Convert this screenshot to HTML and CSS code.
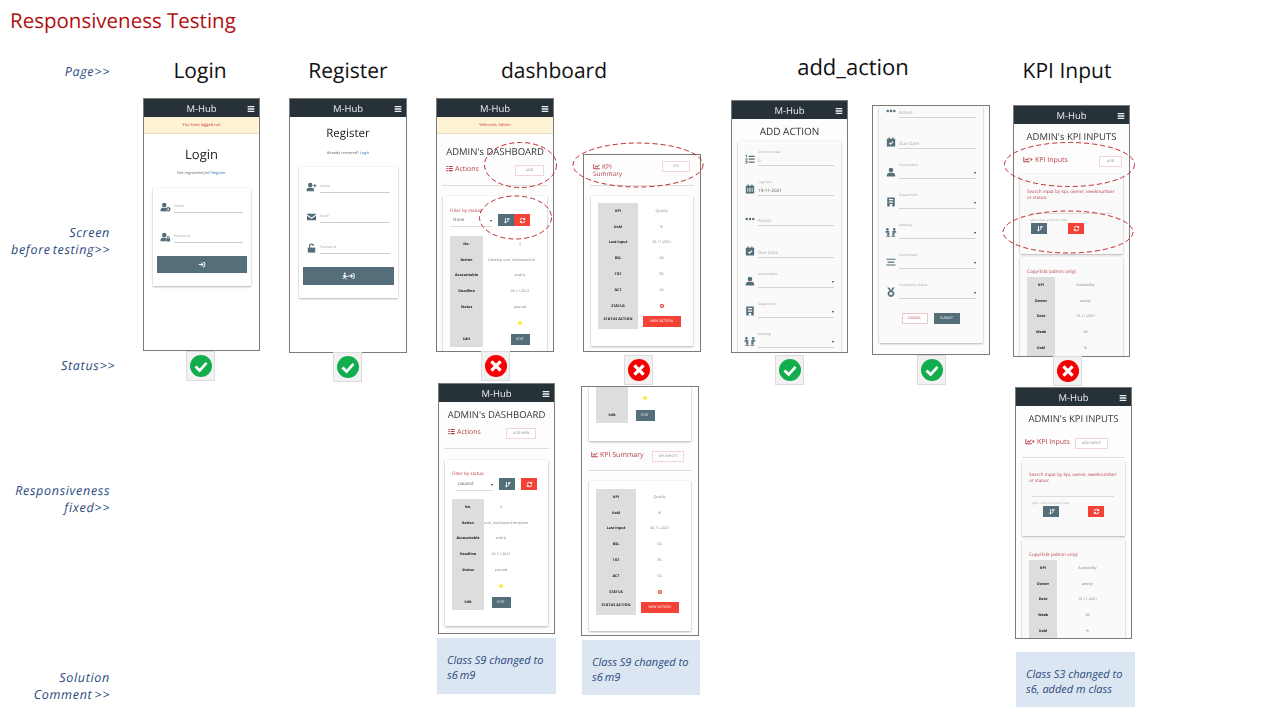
FILE: index.html
```html
<!DOCTYPE html>
<html lang="en">
<head>
<meta charset="utf-8">
<title>Responsiveness Testing</title>
<link rel="stylesheet" href="styles.css">
</head>
<body>
<svg class="defs" width="0" height="0" aria-hidden="true">
  <symbol id="i-menu" viewBox="0 0 24 24"><path d="M2 3h20v4H2zM2 10h20v4H2zM2 17h20v4H2z"/></symbol>
  <symbol id="i-user" viewBox="0 0 24 24"><circle cx="12" cy="7" r="5.5"/><path d="M2 23v-3c0-4 3-6.5 6-6.5h8c3 0 6 2.500 6 6.500v3z"/></symbol>
  <symbol id="i-usercog" viewBox="0 0 24 24"><circle cx="9" cy="7" r="5.500"/><path d="M0 22v-3c0-3 2.500-5.500 5-5.500h8l1 1.500-1 8z"/><path fill-rule="evenodd" d="M18.500 12a5.500 5.500 0 1 0 .01 0zM18.500 15.500a2 2 0 1 1-.01 0z"/></symbol>
  <symbol id="i-userlock" viewBox="0 0 24 24"><circle cx="9" cy="7" r="5.500"/><path d="M0 22v-3c0-3 2.500-5.500 5-5.500h8v8.500z"/><path fill-rule="evenodd" d="M14 15h1v-2a3.500 3.500 0 0 1 7 0v2h1v8h-9zM17 15h3v-2a1.500 1.500 0 0 0-3 0z"/></symbol>
  <symbol id="i-userplus" viewBox="0 0 24 24"><circle cx="9" cy="7" r="5.500"/><path d="M0 22v-3c0-3 2.500-5.500 5-5.500h8c3 0 5 2.500 5 5.500v3z"/><path d="M19 5h2v3h3v2h-3v3h-2v-3h-3V8h3z"/></symbol>
  <symbol id="i-mail" viewBox="0 0 24 24"><path d="M1 4h22v2L12 13 1 6z"/><path d="M1 9l11 7 11-7v11H1z"/></symbol>
  <symbol id="i-unlock" viewBox="0 0 24 24"><path d="M3 11h18v12H3z"/><path d="M6 11V7a6 6 0 0 1 12 0h-3a3 3 0 0 0-6 0v4z"/></symbol>
  <symbol id="i-signin" viewBox="0 0 24 24"><path d="M1 10h9V5l8 7-8 7v-5H1z"/><path d="M15 3h3a5 5 0 0 1 5 5v8a5 5 0 0 1-5 5h-3v-3h3a2 2 0 0 0 2-2V8a2 2 0 0 0-2-2h-3z"/></symbol>
  <symbol id="i-run" viewBox="0 0 42 24"><circle cx="9" cy="4" r="3"/><path d="M5 8h6l4 5h4v2h-5l-2-2-1 4 3 3v4h-2v-3l-4-3-2 3H1v-2h4l2-7-2 1-1 3H2z"/><path d="M20 10h9V5l7 7-7 7v-5h-9z"/><path d="M34 3h2a5 5 0 0 1 5 5v8a5 5 0 0 1-5 5h-2v-3h2a2 2 0 0 0 2-2V8a2 2 0 0 0-2-2h-2z"/></symbol>
  <symbol id="i-list" viewBox="0 0 24 24"><path d="M1 3h5v4H1zM9 3h14v4H9zM1 10h5v4H1zM9 10h14v4H9zM1 17h5v4H1zM9 17h14v4H9z"/></symbol>
  <symbol id="i-chart" viewBox="0 0 24 24"><path d="M1 3h3v15h19v3H1z"/><path d="M6 14l5-6 4 4 6-7 2 2-8 9-4-4-3 4z"/></symbol>
  <symbol id="i-chartplay" viewBox="0 0 34 24"><path d="M1 3h3v15h19v3H1z"/><path d="M6 14l5-6 4 4 6-7 2 2-8 9-4-4-3 4z"/><path d="M26 6l7 6-7 6z"/></symbol>
  <symbol id="i-sort" viewBox="0 0 24 24"><path d="M7 3h3v13h4l-5.500 6L3 16h4z"/><path d="M14 3h9v3h-9zM14 8h7v3h-7zM14 13h4v3h-4z"/></symbol>
  <symbol id="i-sync" viewBox="0 0 24 24"><path d="M3 11a9 9 0 0 1 15-6l3-3v8h-8l3-3a6 6 0 0 0-10 4z"/><path d="M21 13a9 9 0 0 1-15 6l-3 3v-8h8l-3 3a6 6 0 0 0 10-4z"/></symbol>
  <symbol id="i-listol" viewBox="0 0 24 24"><path d="M9 4h14v3H9zM9 11h14v3H9zM9 18h14v3H9z"/><path d="M2 2h3v6H3V4H2zM1 10h5v2l-3 2h3v1.500H1v-2l3-2H1zM1 17h5v6H1v-1.500h3V20.500H2v-1.500h2v-.5H1z"/></symbol>
  <symbol id="i-cal" viewBox="0 0 24 24"><path fill-rule="evenodd" d="M2 4h4V1h3v3h6V1h3v3h4v19H2zM5 10v3h3v-3zM10 10v3h4v-3zM16 10v3h3v-3zM5 15v3h3v-3zM10 15v3h4v-3zM16 15v3h3v-3z"/></symbol>
  <symbol id="i-calcheck" viewBox="0 0 24 24"><path fill-rule="evenodd" d="M2 4h4V1h3v3h6V1h3v3h4v19H2zM7 15l4 4 7-7-2-2-5 5-2-2z"/></symbol>
  <symbol id="i-dots" viewBox="0 0 24 24"><circle cx="4" cy="12" r="3"/><circle cx="12" cy="12" r="3"/><circle cx="20" cy="12" r="3"/></symbol>
  <symbol id="i-bldg" viewBox="0 0 24 24"><path fill-rule="evenodd" d="M3 1h18v22h-6v-6H9v6H3zM7 5v3h10V5zM7 11v3h10v-3z"/></symbol>
  <symbol id="i-people" viewBox="0 0 30 24"><circle cx="6" cy="5" r="3"/><path d="M1 14v-2c0-2 2-3 5-3s5 1 5 3v2z"/><circle cx="23" cy="5" r="3"/><path d="M18 12c0-2 2-3 5-3s5 1 5 3v2H18z"/><circle cx="8" cy="17" r="3"/><path d="M3 24v-1c0-1 2-2 5-2s5 1 5 2v1z"/><circle cx="21" cy="17" r="3"/><path d="M16 24v-1c0-1 2-2 5-2s5 1 5 2v1z"/></symbol>
  <symbol id="i-lines" viewBox="0 0 24 24"><path d="M1 4h22v2.500H1zM4 11h16v2.500H4zM1 18h22v2.500H1z"/></symbol>
  <symbol id="i-medal" viewBox="0 0 24 24"><path d="M3 1h5l4 6 4-6h5l-6 8H9z"/><path fill-rule="evenodd" d="M12 8a8 8 0 1 0 .01 0zM12 12a4 4 0 1 1-.01 0z"/></symbol>
  <symbol id="i-ok" viewBox="0 0 24 24"><circle cx="12" cy="12" r="12" fill="#12ad4d"/><path d="M6 12.500l4.500 4.500L18 8.500" fill="none" stroke="#fff" stroke-width="3"/></symbol>
  <symbol id="i-no" viewBox="0 0 24 24"><circle cx="12" cy="12" r="12" fill="#f40000"/><path d="M7 7l10 10M17 7L7 17" fill="none" stroke="#fff" stroke-width="3.600"/></symbol>
  <symbol id="i-xdot" viewBox="0 0 24 24"><circle cx="12" cy="12" r="12" fill="#e53935"/><path d="M7 7l10 10M17 7L7 17" fill="none" stroke="#fff" stroke-width="4"/></symbol>
</svg>

<main class="slide">
  <h1 class="title">Responsiveness Testing</h1>

  <p class="lbl lbl-page">Page&gt;&gt;</p>
  <p class="lbl lbl-screen">Screen<br>before testing&gt;&gt;</p>
  <p class="lbl lbl-status">Status&gt;&gt;</p>
  <p class="lbl lbl-fixed">Responsiveness<br>fixed&gt;&gt;</p>
  <p class="lbl lbl-comment">Solution<br>Comment &gt;&gt;</p>

  <h2 class="col col-login">Login</h2>
  <h2 class="col col-register">Register</h2>
  <h2 class="col col-dash">dashboard</h2>
  <h2 class="col col-add">add_action</h2>
  <h2 class="col col-kpi">KPI Input</h2>

  <!-- Login -->
  <section class="phone ph-login">
    <div class="nav"><span></span><span>M-Hub</span><svg class="burger"><use href="#i-menu"/></svg></div>
    <div class="flash">You have logged out</div>
    <h3 class="auth-h auth-h-login">Login</h3>
    <p class="auth-sub">Not registered yet? <a class="link">Register</a></p>
    <div class="card auth-card auth-card-login">
      <div class="af"><svg class="ai"><use href="#i-usercog"/></svg><div class="ab">Name</div></div>
      <div class="af af-next"><svg class="ai"><use href="#i-userlock"/></svg><div class="ab">Password</div></div>
      <div class="auth-btn"><svg class="bi"><use href="#i-signin"/></svg></div>
    </div>
  </section>

  <!-- Register -->
  <section class="phone ph-register">
    <div class="nav"><span></span><span>M-Hub</span><svg class="burger"><use href="#i-menu"/></svg></div>
    <h3 class="auth-h auth-h-reg">Register</h3>
    <p class="auth-sub">Already reistered? <a class="link">Login</a></p>
    <div class="card auth-card auth-card-reg">
      <div class="af"><svg class="ai"><use href="#i-userplus"/></svg><div class="ab">Name</div></div>
      <div class="af af-next"><svg class="ai"><use href="#i-mail"/></svg><div class="ab">Email</div></div>
      <div class="af af-wide"><svg class="ai"><use href="#i-unlock"/></svg><div class="ab">Password</div></div>
      <div class="auth-btn auth-btn-reg"><svg class="bi bi-run"><use href="#i-run"/></svg></div>
    </div>
  </section>

  <!-- Dashboard before -->
  <section class="phone ph-dash">
    <div class="nav"><span></span><span>M-Hub</span><svg class="burger"><use href="#i-menu"/></svg></div>
    <div class="flash">Welcome, Admin</div>
    <h3 class="page-h">ADMIN's DASHBOARD</h3>
    <div class="head"><span class="head-t"><svg class="hi"><use href="#i-list"/></svg>Actions</span><span class="btn-o btn-o-add">ADD</span></div>
    <hr class="rule">
    <div class="card dash-card">
      <p class="red-t">Filter by status:</p>
      <div class="ctl">
        <div class="sel sel-none">None<i class="caret"></i></div>
        <span class="ib ib-sort"><svg><use href="#i-sort"/></svg></span><span class="ib ib-sync"><svg><use href="#i-sync"/></svg></span>
      </div>
      <table class="kv kv-dash">
        <tr><th>No.</th><td>2</td></tr>
        <tr><th>Action</th><td><div class="clip">Develop user_dashboard te</div></td></tr>
        <tr><th>Accountable</th><td>andriy</td></tr>
        <tr><th>Deadline</th><td>26-11-2021</td></tr>
        <tr><th>Status</th><td>paused</td></tr>
        <tr><th></th><td><i class="dot"></i></td></tr>
        <tr><th>Edit</th><td><span class="b-edit">EDIT</span></td></tr>
      </table>
    </div>
  </section>

  <!-- KPI summary before -->
  <section class="phone ph-sum">
    <div class="head head-sum"><span class="head-t head-wrap"><svg class="hi"><use href="#i-chart"/></svg>KPI<br>Summary</span><span class="btn-o btn-o-kpi">KPI</span></div>
    <hr class="rule rule-sum">
    <div class="card sum-card">
      <table class="kv kv-sum">
        <tr><th>KPI</th><td>Quality</td></tr>
        <tr><th>UoM</th><td>%</td></tr>
        <tr><th>Last Input</th><td>30-11-2021</td></tr>
        <tr><th>BSL</th><td>60</td></tr>
        <tr><th>TGT</th><td>85</td></tr>
        <tr><th>ACT</th><td>63</td></tr>
        <tr><th>STATUS</th><td><svg class="xd"><use href="#i-xdot"/></svg></td></tr>
        <tr><th class="th-top">STATUS ACTION</th><td><span class="b-new">NEW ACTION</span></td></tr>
      </table>
    </div>
  </section>

  <!-- Add action 1 -->
  <section class="phone ph-add">
    <div class="nav"><span></span><span>M-Hub</span><svg class="burger"><use href="#i-menu"/></svg></div>
    <h3 class="page-h page-h-add">ADD ACTION</h3>
    <div class="card form-card">
      <div class="f f-first"><svg class="fi"><use href="#i-listol"/></svg><div class="fb"><label>Action number</label><div class="v">0</div></div></div>
      <div class="f"><svg class="fi"><use href="#i-cal"/></svg><div class="fb"><label>Log Date</label><div class="v v-dark">19-11-2021</div></div></div>
      <div class="f"><svg class="fi"><use href="#i-dots"/></svg><div class="fb"><div class="v">Action</div></div></div>
      <div class="f f-tall"><svg class="fi"><use href="#i-calcheck"/></svg><div class="fb"><div class="v">Due Date</div></div></div>
      <div class="f"><svg class="fi"><use href="#i-user"/></svg><div class="fb"><label>Accountable</label><div class="v"><i class="caret"></i></div></div></div>
      <div class="f"><svg class="fi"><use href="#i-bldg"/></svg><div class="fb"><label>Department</label><div class="v"><i class="caret"></i></div></div></div>
      <div class="f"><svg class="fi fi-wide"><use href="#i-people"/></svg><div class="fb"><label>Meeting</label><div class="v"><i class="caret"></i></div></div></div>
    </div>
  </section>

  <!-- Add action 2 -->
  <section class="phone ph-add2">
    <div class="card form-card form-card-2">
      <div class="f f-cut"><svg class="fi"><use href="#i-dots"/></svg><div class="fb"><div class="v">Action</div></div></div>
      <div class="f f-tall"><svg class="fi"><use href="#i-calcheck"/></svg><div class="fb"><div class="v">Due Date</div></div></div>
      <div class="f"><svg class="fi"><use href="#i-user"/></svg><div class="fb"><label>Accountable</label><div class="v"><i class="caret"></i></div></div></div>
      <div class="f"><svg class="fi"><use href="#i-bldg"/></svg><div class="fb"><label>Department</label><div class="v"><i class="caret"></i></div></div></div>
      <div class="f"><svg class="fi fi-wide"><use href="#i-people"/></svg><div class="fb"><label>Meeting</label><div class="v"><i class="caret"></i></div></div></div>
      <div class="f"><svg class="fi"><use href="#i-lines"/></svg><div class="fb"><label>Workstream</label><div class="v"><i class="caret"></i></div></div></div>
      <div class="f"><svg class="fi"><use href="#i-medal"/></svg><div class="fb"><label>Completion Status</label><div class="v"><i class="caret"></i></div></div></div>
      <div class="form-act"><span class="btn-o btn-o-cancel">CANCEL</span><span class="b-submit">SUBMIT</span></div>
    </div>
  </section>

  <!-- KPI input before -->
  <section class="phone ph-kpi">
    <div class="nav"><span></span><span>M-Hub</span><svg class="burger"><use href="#i-menu"/></svg></div>
    <h3 class="page-h page-h-kpi">ADMIN's KPI INPUTS</h3>
    <div class="head head-kpi"><span class="head-t"><svg class="hi hi-play"><use href="#i-chartplay"/></svg>KPI Inputs</span><span class="btn-o btn-o-kadd">ADD</span></div>
    <div class="card search-card">
      <p class="red-t">Search input by kpi, owner, weeknumber or status:</p>
      <div class="search-line"></div>
      <p class="hint">type in text and press filter</p>
      <div class="ctl ctl-kpi"><span class="ib ib-sort"><svg><use href="#i-sort"/></svg></span><span class="ib ib-sync"><svg><use href="#i-sync"/></svg></span></div>
    </div>
    <div class="card copy-card">
      <p class="red-t">Copy/Edit (admin only):</p>
      <table class="kv kv-kpi">
        <tr><th>KPI</th><td>Availability</td></tr>
        <tr><th>Owner</th><td>andriy</td></tr>
        <tr><th>Date</th><td>15-11-2021</td></tr>
        <tr><th>Week</th><td>46</td></tr>
        <tr><th>UoM</th><td>%</td></tr>
      </table>
    </div>
  </section>

  <!-- Dashboard fixed -->
  <section class="phone ph-dashfix">
    <div class="nav"><span></span><span>M-Hub</span><svg class="burger"><use href="#i-menu"/></svg></div>
    <h3 class="page-h page-h-fix">ADMIN's DASHBOARD</h3>
    <div class="head head-fix"><span class="head-t"><svg class="hi"><use href="#i-list"/></svg>Actions</span><span class="btn-o btn-o-new">ADD NEW</span></div>
    <hr class="rule">
    <div class="card dashfix-card">
      <p class="red-t">Filter by status:</p>
      <div class="ctl ctl-fix">
        <div class="sel sel-paused">paused<i class="caret"></i></div>
        <span class="ib ib-sort"><svg><use href="#i-sort"/></svg></span><span class="ib ib-sync"><svg><use href="#i-sync"/></svg></span>
      </div>
      <table class="kv kv-fix">
        <tr><th>No.</th><td>2</td></tr>
        <tr><th>Action</th><td>user_dashboard template</td></tr>
        <tr><th>Accountable</th><td>andriy</td></tr>
        <tr><th>Deadline</th><td>26-11-2021</td></tr>
        <tr><th>Status</th><td>paused</td></tr>
        <tr><th></th><td><i class="dot"></i></td></tr>
        <tr><th>Edit</th><td><span class="b-edit">EDIT</span></td></tr>
      </table>
    </div>
  </section>

  <!-- KPI summary fixed -->
  <section class="phone ph-sumfix">
    <div class="card tail-card">
      <table class="kv kv-tail">
        <tr class="r-dot"><th></th><td><i class="dot"></i></td></tr>
        <tr class="r-edit"><th>Edit</th><td><span class="b-edit">EDIT</span></td></tr>
      </table>
    </div>
    <div class="head head-sumfix"><span class="head-t"><svg class="hi"><use href="#i-chart"/></svg>KPI Summary</span><span class="btn-o btn-o-ki">KPI INPUTS</span></div>
    <hr class="rule rule-sum">
    <div class="card sumfix-card">
      <table class="kv kv-sumfix">
        <tr><th>KPI</th><td>Quality</td></tr>
        <tr><th>UoM</th><td>%</td></tr>
        <tr><th>Last Input</th><td>30-11-2021</td></tr>
        <tr><th>BSL</th><td>60</td></tr>
        <tr><th>TGT</th><td>85</td></tr>
        <tr><th>ACT</th><td>63</td></tr>
        <tr><th>STATUS</th><td><svg class="xd"><use href="#i-xdot"/></svg></td></tr>
        <tr><th class="th-top">STATUS ACTION</th><td><span class="b-new">NEW ACTION</span></td></tr>
      </table>
    </div>
  </section>

  <!-- KPI input fixed -->
  <section class="phone ph-kpifix">
    <div class="nav"><span></span><span>M-Hub</span><svg class="burger"><use href="#i-menu"/></svg></div>
    <h3 class="page-h page-h-kpi">ADMIN's KPI INPUTS</h3>
    <div class="head head-kpifix"><span class="head-t"><svg class="hi hi-play"><use href="#i-chartplay"/></svg>KPI Inputs</span><span class="btn-o btn-o-ai">ADD INPUT</span></div>
    <hr class="rule rule-kf">
    <div class="card search-card search-fix">
      <p class="red-t">Search input by kpi, owner, weeknumber or status:</p>
      <div class="search-line"></div>
      <p class="hint">type in text and press filter</p>
      <div class="ctl ctl-kf"><span class="ib ib-sort"><svg><use href="#i-sort"/></svg></span><span class="ib ib-sync"><svg><use href="#i-sync"/></svg></span></div>
    </div>
    <div class="card copy-card copy-fix">
      <p class="red-t">Copy/Edit (admin only):</p>
      <table class="kv kv-kpi">
        <tr><th>KPI</th><td>Availability</td></tr>
        <tr><th>Owner</th><td>andriy</td></tr>
        <tr><th>Date</th><td>15-11-2021</td></tr>
        <tr><th>Week</th><td>46</td></tr>
        <tr><th>UoM</th><td>%</td></tr>
      </table>
    </div>
  </section>

  <!-- Status tiles -->
  <div class="tile t-login"><svg><use href="#i-ok"/></svg></div>
  <div class="tile t-register"><svg><use href="#i-ok"/></svg></div>
  <div class="tile t-dash"><svg><use href="#i-no"/></svg></div>
  <div class="tile t-sum"><svg><use href="#i-no"/></svg></div>
  <div class="tile t-add"><svg><use href="#i-ok"/></svg></div>
  <div class="tile t-add2"><svg><use href="#i-ok"/></svg></div>
  <div class="tile t-kpi"><svg><use href="#i-no"/></svg></div>

  <!-- Comments -->
  <p class="note n-dash">Class S9 changed to s6&thinsp;m9</p>
  <p class="note n-sum">Class S9 changed to s6&thinsp;m9</p>
  <p class="note n-kpi">Class S3 changed to s6, added m class</p>

  <!-- Dashed marks -->
  <svg class="marks" viewBox="0 0 1280 720" aria-hidden="true">
    <ellipse cx="520.500" cy="165" rx="36" ry="22.500"/>
    <ellipse cx="515.500" cy="217.500" rx="36" ry="21.500"/>
    <ellipse cx="638" cy="165" rx="65" ry="22"/>
    <ellipse cx="1069.500" cy="164.500" rx="65" ry="22"/>
    <ellipse cx="1068" cy="232" rx="65" ry="21"/>
  </svg>
</main>
</body>
</html>
```
FILE: styles.css
```css
* { box-sizing: border-box; }
html, body { margin: 0; padding: 0; background: #fff; }
.defs { position: absolute; }
.slide {
  position: relative;
  width: 1280px;
  height: 720px;
  overflow: hidden;
  background: #fff;
  font-family: "Open Sans", "Noto Sans", "Liberation Sans", sans-serif;
  text-rendering: geometricPrecision;
}
p, h1, h2, h3, hr { margin: 0; padding: 0; font-weight: 400; }

/* Slide furniture */
.title { position: absolute; left: 10px; top: 8px; font-size: 20.500px; line-height: 27px; color: #b00f0f; white-space: nowrap; }
.lbl { position: absolute; font-size: 12.500px; line-height: 16.500px; letter-spacing: .7px; word-spacing: -2px; font-style: italic; color: #2a4a80; text-align: right; white-space: nowrap; }
.lbl-page { right: 1170px; top: 64px; }
.lbl-screen { right: 1170px; top: 225px; }
.lbl-status { left: 61px; top: 358px; }
.lbl-fixed { right: 1170px; top: 483px; }
.lbl-comment { right: 1170px; top: 670px; }
.col { position: absolute; width: 200px; text-align: center; font-size: 21px; line-height: 28px; color: #111; white-space: nowrap; }
.col-login { left: 100px; top: 57px; }
.col-register { left: 248px; top: 57px; }
.col-dash { left: 454px; top: 57px; }
.col-add { left: 753px; top: 53px; font-size: 22px; }
.col-kpi { left: 967px; top: 57px; }

/* Phone frame */
.phone { position: absolute; border: 1.500px solid #7a7a7a; background: #fdfdfd; overflow: hidden; color: #444; filter: blur(.3px); }
.ph-login { left: 143px; top: 98px; width: 117px; height: 253px; background: #fff; }
.ph-register { left: 289px; top: 98px; width: 118px; height: 255px; background: #fff; }
.ph-dash { left: 436px; top: 98px; width: 118px; height: 254px; }
.ph-sum { left: 583px; top: 154px; width: 118px; height: 198px; }
.ph-add { left: 731px; top: 100px; width: 117px; height: 253px; }
.ph-add2 { left: 872px; top: 105px; width: 118px; height: 250px; }
.ph-kpi { left: 1013px; top: 105px; width: 117px; height: 252px; }
.ph-dashfix { left: 438px; top: 383px; width: 117px; height: 251px; }
.ph-sumfix { left: 581px; top: 386px; width: 118px; height: 250px; }
.ph-kpifix { left: 1015px; top: 387px; width: 117px; height: 252px; }

.nav { height: 18px; padding-top: 2px; background: #263238; color: #eceff1; font-size: 9.500px; line-height: 16px; display: grid; grid-template-columns: 1fr auto 1fr; align-items: center; }
.burger { justify-self: end; width: 8px; height: 8px; margin-right: 4px; margin-top: -1px; fill: #eceff1; }
.flash { height: 17px; background: #fff3d6; border-bottom: 1px solid #e6dcc4; color: #c0392b; font-size: 4px; line-height: 17px; text-align: center; }

.card { background: #fff; box-shadow: 0 1px 2px rgba(0,0,0,.28), 0 0 1px rgba(0,0,0,.12); }
.rule { border: 0; height: 1px; background: #dedede; margin: 9px 5px 0; }

/* Login / Register */
.auth-h { font-size: 13px; line-height: 18px; text-align: center; color: #222; }
.auth-h-login { margin-top: 11px; }
.auth-h-reg { margin-top: 8px; font-size: 11.500px; }
.auth-sub { margin-top: 8px; font-size: 3.800px; line-height: 6px; text-align: center; color: #666; }
.link { color: #3b7dbd; }
.auth-card { margin: 11px 8px 0 9px; padding: 14px 4px 13px; }
.auth-card-reg { margin-top: 10px; padding-top: 15px; }
.af { display: grid; grid-template-columns: 11px 1fr; column-gap: 3px; margin: 0 4px 0 3px; height: 11px; align-items: end; }
.af-next { margin-top: 19px; }
.af-wide { margin-top: 20px; }
.ai { width: 11px; height: 10px; fill: #546e7a; margin-bottom: 1px; }
.ab { height: 11px; border-bottom: 1px solid #ccc; font-size: 3.600px; line-height: 10px; color: #aaa; }
.auth-btn { margin-top: 13px; height: 17px; background: #546e7a; display: flex; align-items: center; justify-content: center; }
.auth-btn-reg { height: 18px; }
.bi { width: 8px; height: 7px; fill: #fff; }
.bi-run { width: 13px; height: 8px; }

/* Shared headings */
.page-h { margin-top: 11px; font-size: 9.500px; line-height: 14px; text-align: center; color: #333; white-space: nowrap; }
.page-h-fix, .page-h-add, .page-h-kpi { margin-top: 6px; }
.page-h-add { margin-top: 5px; font-size: 10px; }
.head { display: flex; justify-content: space-between; align-items: flex-end; height: 14px; margin: 3px 9px 0; }
.head-t { color: #b8404a; font-size: 7px; line-height: 8px; align-self: center; margin-top: 1px; white-space: nowrap; }
.hi { width: 7px; height: 7px; fill: #b8404a; margin-right: 2px; vertical-align: -1px; }
.hi-play { width: 10px; }
.btn-o { display: flex; align-items: center; justify-content: center; height: 11px; border: 1px solid #f0d6da; background: #fff; color: #888; font-size: 3.600px; white-space: nowrap; }
.btn-o-add { width: 29px; }
.btn-o-kadd { width: 23px; }
.btn-o-new { width: 30px; }
.btn-o-ki { width: 32px; }
.btn-o-ai { width: 33px; }
.btn-o-cancel { width: 26px; color: #b8404a; border-color: #e8c8cc; }
.red-t { color: #b8404a; font-size: 4.600px; line-height: 6px; }

/* Dashboard */
.dash-card { margin: 10px 6px 0; padding: 12px 7px 20px; }
.ctl { display: flex; margin-top: 0; height: 12px; }
.sel { position: relative; height: 13px; font-size: 4.500px; line-height: 13px; padding-left: 3px; border-bottom: 1px solid #ddd; color: #666; }
.sel-none { width: 42px; margin-right: 6px; }
.caret { position: absolute; right: 0; bottom: 4px; border: 1.300px solid transparent; border-top: 2px solid #333; border-bottom: 0; }
.ib { display: flex; align-items: center; justify-content: center; width: 16px; height: 12px; }
.ib svg { width: 7px; height: 7px; fill: #fff; }
.ib-sort { background: #546e7a; }
.ib-sync { background: #f44336; }
.kv { border-collapse: collapse; table-layout: fixed; margin-top: 10px; font-size: 3.700px; }
.kv th { height: 15.800px; padding: 1px 0 0; background: #ddd; color: #222; font-weight: 700; text-align: center; white-space: nowrap; }
.kv td { height: 15.800px; padding: 1px 0 0; color: #888; text-align: center; white-space: nowrap; }
.kv-dash { width: 107px; }
.kv-dash th { width: 33px; }
.clip { width: 53px; overflow: hidden; text-align: left; margin-left: 5px; }
.dot { display: block; width: 4px; height: 4px; margin: 0 auto; border-radius: 50%; background: #ffe93b; }
.b-edit { display: inline-block; width: 19px; height: 11px; line-height: 11px; background: #546e7a; color: #e6ecee; text-align: center; }
.th-top { vertical-align: top; line-height: 9px; }
.b-new { display: inline-block; width: 38px; height: 11px; line-height: 11px; background: #f44336; color: #fff; text-align: center; }
.xd { display: block; width: 4px; height: 4px; margin: 0 auto; }

/* KPI summary */
.head-sum { margin: 8px 10px 0 9px; height: 14px; align-items: flex-start; }
.head-wrap { align-self: flex-start; margin-top: 0; font-size: 6.500px; line-height: 7px; }
.btn-o-kpi { width: 28px; margin-top: -2px; }
.rule-sum { margin: 8px 6px 0; }
.sum-card { margin: 10px 7px 0; height: 150px; padding: 7px 7px 0; }
.kv-sum, .kv-sumfix { margin-top: 0; width: 87px; }
.kv-sum th, .kv-sumfix th { width: 40px; }

/* Add action */
.form-card { margin: 3px 6px 0; padding: 0 7px 0; background: #fafafa; height: 230px; }
.form-card-2 { margin-top: 0; height: 237px; }
.f { display: grid; grid-template-columns: 13px 1fr; align-items: end; height: 30px; }
.f-first { height: 25px; }
.f-tall { height: 32px; }
.f-cut { height: 11px; }
.fi { width: 10px; height: 10px; fill: #546e7a; margin-bottom: 2px; }
.fi-wide { width: 12px; margin-left: -1px; }
.fb { border-bottom: 1px solid #d2d2d2; }
.fb label { display: block; height: 8px; font-size: 3.300px; line-height: 7px; color: #aaa; }
.v { position: relative; height: 9px; font-size: 4.600px; line-height: 10px; color: #aaa; }
.v-dark { color: #555; }
.form-act { display: flex; justify-content: center; gap: 6px; margin-top: 14px; height: 11px; margin-left: -1px; }
.b-submit { display: flex; align-items: center; justify-content: center; width: 26px; background: #546e7a; color: #e6ecee; font-size: 3.600px; }

/* KPI input */
.head-kpi { margin: 9px 7px 0 9px; }
.search-card { margin: 7px 6px 0; height: 80px; padding: 15px 7px 0; background: #fafafa; }
.search-line { margin: 12px 4px 0 3px; height: 1px; background: #ddd; }
.hint { margin-top: 4px; margin-left: 3px; font-size: 3px; line-height: 4px; color: #aaa; }
.ctl-kpi { margin: 1px 0 0 4px; height: 11px; gap: 21px; }
.ctl-kpi .ib, .ctl-kf .ib { height: 11px; }
.copy-card { margin: 3px 6px 0; height: 120px; padding: 12px 7px 0; background: #fafafa; }
.kv-kpi { margin-top: 2px; width: 89px; }
.kv-kpi th { width: 28px; }

/* Dashboard fixed */
.head-fix { margin: 3px 18px 0 9px; }
.dashfix-card { margin: 11px 6px 0; height: 166px; padding: 11px 7px 0; }
.ctl-fix { margin-top: 1px; gap: 6px; }
.sel-paused { width: 38px; margin-left: 3px; }
.kv-fix { margin-top: 9px; width: 66px; }
.kv-fix th { width: 32px; }

/* KPI summary fixed */
.tail-card { margin: 0 7px 0; height: 54px; padding: 0 7px; }
.kv-tail { margin-top: 0; width: 66px; }
.kv-tail th { width: 32px; }
.kv-tail .r-dot th, .kv-tail .r-dot td { height: 20px; }
.kv-tail .r-edit th, .kv-tail .r-edit td { height: 16px; }
.head-sumfix { margin: 7px 14px 0 9px; }
.sumfix-card { margin: 10px 7px 0; height: 150px; padding: 8px 7px 0; }

/* KPI input fixed */
.head-kpifix { margin: 9px 23px 0 9px; }
.rule-kf { margin: 8px 6px 0; }
.search-fix { margin-top: 3px; height: 75px; padding-top: 11px; }
.search-fix .search-line { margin-top: 12px; }
.ctl-kf { margin: 1px 0 0 14px; height: 11px; gap: 29px; }
.copy-fix { margin-top: 4px; }

/* Status tiles */
.tile { position: absolute; width: 29px; height: 30px; background: #f2f2f2; border: 1px solid #dcdcdc; display: flex; align-items: center; justify-content: center; }
.tile svg { width: 22px; height: 22px; }
.t-login { left: 186px; top: 351px; }
.t-register { left: 333px; top: 352px; }
.t-dash { left: 481px; top: 351px; }
.t-sum { left: 624px; top: 355px; }
.t-add { left: 775px; top: 355px; }
.t-add2 { left: 917px; top: 355px; }
.t-kpi { left: 1053px; top: 356px; }

/* Comment boxes */
.note { position: absolute; background: #dce6f2; color: #2a4a80; font-size: 11px; line-height: 15px; font-style: italic; padding: 15px 6px 0 10px; }
.n-dash { left: 437px; top: 638px; width: 119px; height: 56px; }
.n-sum { left: 582px; top: 640px; width: 118px; height: 55px; }
.n-kpi { left: 1016px; top: 652px; width: 119px; height: 55px; }

/* Dashed ellipses */
.marks { position: absolute; left: 0; top: 0; width: 1280px; height: 720px; pointer-events: none; fill: none; stroke: #c22b2b; stroke-width: 1; stroke-dasharray: 5 3; }
```
